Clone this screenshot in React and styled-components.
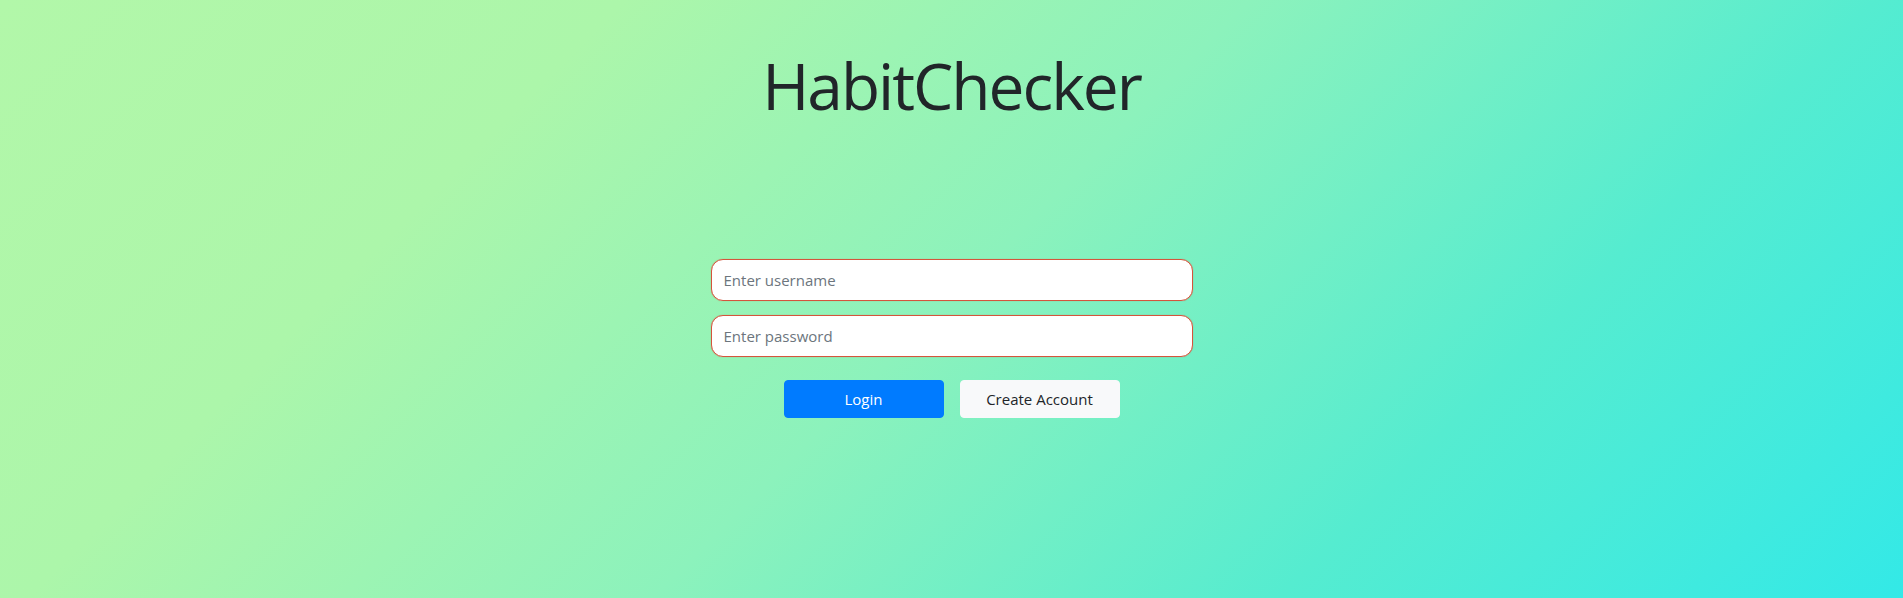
import React, { useState } from "react";
import styled, { createGlobalStyle } from "styled-components";

const GlobalStyle = createGlobalStyle`
  html, body {
    margin: 0;
    padding: 0;
  }
  body {
    font-family: "Open Sans", "Liberation Sans", sans-serif;
    color: #212529;
  }
  * {
    box-sizing: border-box;
  }
`;

const Page = styled.div`
  min-height: 100vh;
  display: flex;
  flex-direction: column;
  align-items: center;
  padding-top: 48px;
  background: linear-gradient(
    135deg,
    #b2f7a9 0%,
    #acf6aa 25%,
    #8cf2bc 50%,
    #55ecd0 75%,
    #33e9e7 100%
  );
`;

const Title = styled.h1`
  margin: 0;
  font-size: 64px;
  font-weight: 400;
  line-height: 1.2;
  letter-spacing: -2px;
  color: #212529;
`;

const Form = styled.form`
  width: 482px;
  margin-top: 134px;
  display: flex;
  flex-direction: column;
  gap: 14px;
`;

const Input = styled.input`
  width: 100%;
  height: 42px;
  padding: 8px 12px;
  font-family: inherit;
  font-size: 15px;
  color: #495057;
  background: #fff;
  border: 1px solid #d4553c;
  border-radius: 12px;
  box-shadow: 0 0 1px rgba(212, 85, 60, 0.6);
  outline: none;

  &::placeholder {
    color: #6c757d;
  }
`;

const ButtonRow = styled.div`
  display: flex;
  justify-content: center;
  gap: 16px;
  margin-top: 9px;
`;

const Button = styled.button`
  width: 160px;
  height: 38px;
  font-family: inherit;
  font-size: 15px;
  border-radius: 4px;
  border: 1px solid ${(props) => (props.primary ? "#007bff" : "#f8f9fa")};
  background: ${(props) => (props.primary ? "#007bff" : "#f8f9fa")};
  color: ${(props) => (props.primary ? "#fff" : "#212529")};
  cursor: pointer;
`;

const App = () => {
  const [username, setUsername] = useState("");
  const [password, setPassword] = useState("");

  return (
    <>
      <GlobalStyle />
      <Page>
        <Title>HabitChecker</Title>
        <Form onSubmit={(e) => e.preventDefault()}>
          <Input
            type="text"
            placeholder="Enter username"
            value={username}
            onChange={(e) => setUsername(e.target.value)}
          />
          <Input
            type="password"
            placeholder="Enter password"
            value={password}
            onChange={(e) => setPassword(e.target.value)}
          />
          <ButtonRow>
            <Button type="submit" primary>
              Login
            </Button>
            <Button type="button">Create Account</Button>
          </ButtonRow>
        </Form>
      </Page>
    </>
  );
};

export default App;
